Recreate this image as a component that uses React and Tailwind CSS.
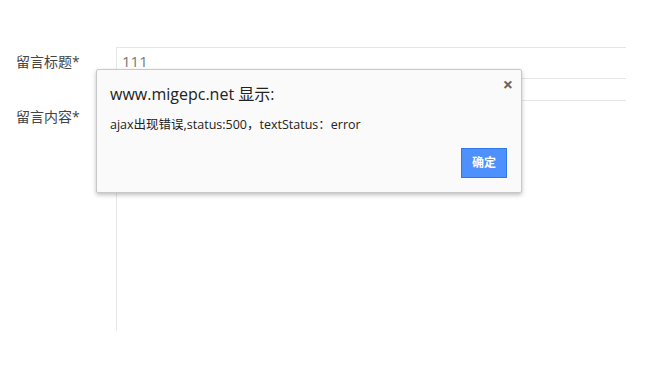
import React from 'react';

const font = { fontFamily: '"Open Sans", "Noto Sans CJK SC", sans-serif' };

export default function App() {
  return (
    <div className="relative w-[658px] h-[379px] bg-white text-[#333]" style={font}>
      {/* Form */}
      <div className="flex flex-col pt-[47px] pl-[16px] gap-[21px]">
        <div className="flex">
          <div className="w-[100px] text-[14px] leading-[29px] text-[#444]">留言标题*</div>
          <div className="w-[510px] h-[32px] border-t border-b border-l border-[#e6e6e6] pl-[5px] text-[15px] leading-[26px] text-[#777]">111</div>
        </div>
        <div className="flex">
          <div className="w-[100px] text-[14px] leading-[34px] text-[#444]">留言内容*</div>
          <div className="w-[510px] h-[231px] border-t border-l border-[#e6e6e6]"></div>
        </div>
      </div>

      {/* Alert dialog */}
      <div className="absolute left-[96px] top-[69px] w-[426px] h-[124px] bg-[#fafafa] border border-[#c8c8c8] rounded-[2px] shadow-[0_2px_4px_rgba(0,0,0,0.25)]">
        <div className="absolute right-[8px] top-[5px] text-[18px] font-bold text-[#666] leading-none">×</div>
        <div className="pl-[13px] pt-[13px] text-[16px] leading-[22px] text-[#222]">www.migepc.net 显示:</div>
        <div className="pl-[13px] pt-[10px] text-[12.5px] leading-[20px] text-[#222]">ajax出现错误,status:500，textStatus：error</div>
        <div className="absolute right-[14px] top-[78px] w-[46px] h-[30px] bg-[#4d90fe] border border-[#3079ed] flex items-center justify-center text-white text-[12px] font-bold">确定</div>
      </div>
    </div>
  );
}
